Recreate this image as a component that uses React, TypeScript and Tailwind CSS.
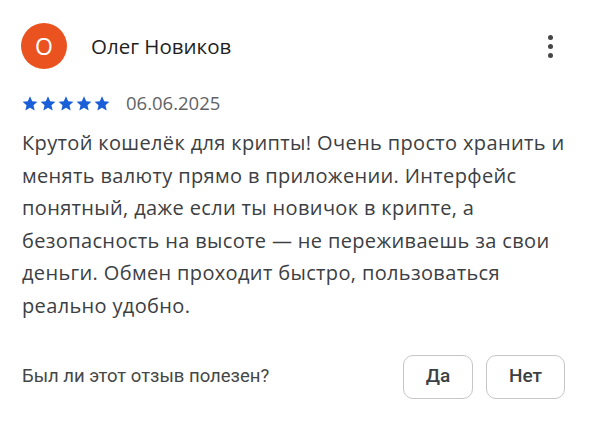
import React from 'react';

const lines = [
  'Крутой кошелёк для крипты! Очень просто хранить и',
  'менять валюту прямо в приложении. Интерфейс',
  'понятный, даже если ты новичок в крипте, а',
  'безопасность на высоте — не переживаешь за свои',
  'деньги. Обмен проходит быстро, пользоваться',
  'реально удобно.',
];

function Star() {
  return (
    <svg width="18" height="17" viewBox="0 0 24 24" fill="#1a5fd8">
      <path d="M12 1.8l3.1 6.9 7.4.7-5.6 5 1.7 7.4L12 17.9l-6.6 3.9 1.7-7.4-5.6-5 7.4-.7z" />
    </svg>
  );
}

export default function App() {
  return (
    <div
      className="w-[597px] h-[425px] bg-white text-[#202124] overflow-hidden"
      style={{ fontFamily: '"Open Sans", Roboto, sans-serif' }}
    >
      {/* Header */}
      <div className="flex items-center pl-[21px] pr-[41px] pt-[23px]">
        <div className="w-[46px] h-[46px] rounded-full bg-[#ea531f] flex items-center justify-center text-white text-[23px]">
          О
        </div>
        <div className="ml-[24px] text-[20.5px] text-[#1f1f1f]">Олег Новиков</div>
        <button className="ml-auto w-3 h-6 flex flex-col items-center justify-center gap-[4px]" aria-label="Меню">
          <span className="w-[5px] h-[5px] rounded-full bg-[#444746]" />
          <span className="w-[5px] h-[5px] rounded-full bg-[#444746]" />
          <span className="w-[5px] h-[5px] rounded-full bg-[#444746]" />
        </button>
      </div>

      {/* Rating */}
      <div className="flex items-center h-[24px] pl-[21px] mt-[22px] gap-[15px]">
        <div className="flex">
          <Star />
          <Star />
          <Star />
          <Star />
          <Star />
        </div>
        <span className="text-[18.5px] text-[#5f6368]">06.06.2025</span>
      </div>

      {/* Review text */}
      <p className="pl-[22px] mt-[12px] text-[20px] leading-[32.6px] tracking-[0.35px] text-[#3c4043] whitespace-nowrap">
        {lines.map((l, i) => (
          <React.Fragment key={i}>
            {l}
            {i < lines.length - 1 && <br />}
          </React.Fragment>
        ))}
      </p>

      {/* Helpful */}
      <div
        className="flex items-center h-[44px] pl-[22px] pr-[32px] mt-[32px]"
        style={{ fontFamily: 'Roboto, "Open Sans", sans-serif' }}
      >
        <span className="text-[18.5px] text-[#444746]">Был ли этот отзыв полезен?</span>
        <div className="ml-auto flex gap-[13px]">
          <button className="w-[70px] h-[44px] rounded-[10px] border border-[#c4c7c5] text-[19px] font-medium text-[#3c4043]">
            Да
          </button>
          <button className="w-[79px] h-[44px] rounded-[10px] border border-[#c4c7c5] text-[19px] font-medium text-[#3c4043]">
            Нет
          </button>
        </div>
      </div>
    </div>
  );
}
